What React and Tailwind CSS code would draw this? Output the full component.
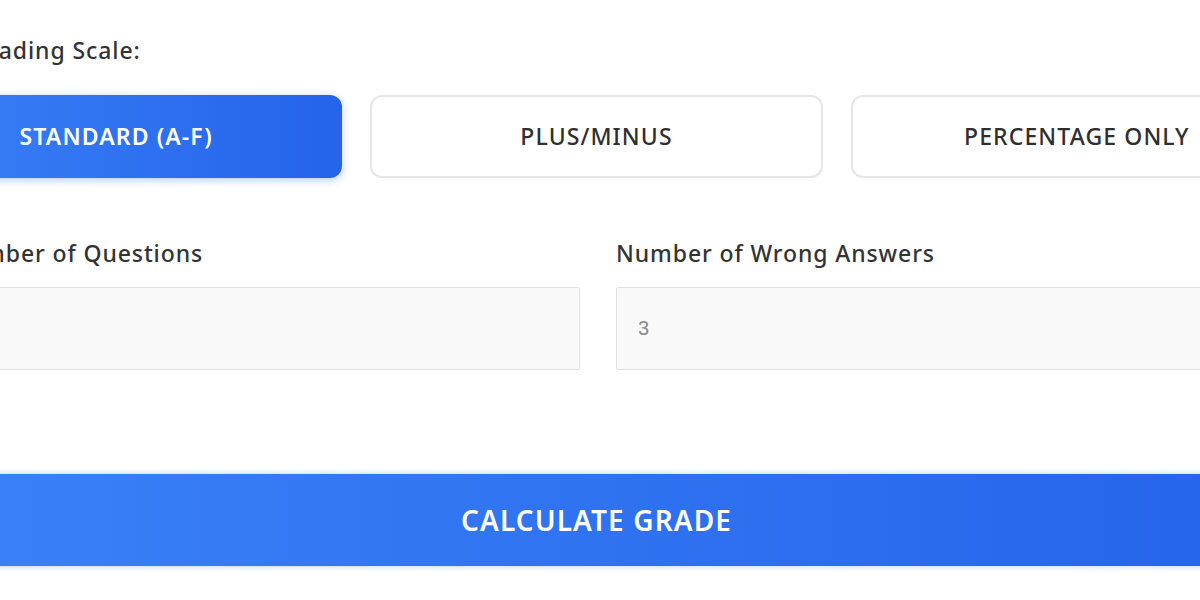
import React, { useState } from 'react';

const scales = ['STANDARD (A-F)', 'PLUS/MINUS', 'PERCENTAGE ONLY'];

const App = () => {
  const [scale, setScale] = useState(0);
  const [questions, setQuestions] = useState('');
  const [wrong, setWrong] = useState('');

  return (
    <div className="w-[1200px] h-[600px] overflow-hidden bg-white font-['Noto_Sans',sans-serif] text-[#2d2d2d]">
      <div className="ml-[-110px] w-[1413px] pt-[35px]">
        {/* Grading scale */}
        <p className="pl-[81px] text-[23px] leading-[30px] tracking-[0.9px] font-medium text-[#333]">Grading Scale:</p>
        <div className="mt-[30px] grid grid-cols-3 gap-[28px]">
          {scales.map((s, i) => (
            <button
              key={s}
              onClick={() => setScale(i)}
              className={
                i === scale
                  ? 'h-[83px] rounded-[12px] bg-gradient-to-r from-[#3b82f6] to-[#2563eb] text-white text-[23px] tracking-[1.1px] font-semibold shadow-[0_2px_8px_rgba(37,99,235,0.35)]'
                  : 'h-[83px] rounded-[12px] bg-white border-2 border-[#e6e6e6] text-[#2f2f2f] text-[23px] tracking-[1.1px] font-medium'
              }
            >
              {s}
            </button>
          ))}
        </div>

        {/* Inputs */}
        <div className="mt-[60px] pl-[59px] pr-[56px] grid grid-cols-2 gap-[36px]">
          <div>
            <label className="block text-[23px] leading-[30px] tracking-[0.9px] font-medium text-[#333]">Number of Questions</label>
            <input
              value={questions}
              onChange={(e) => setQuestions(e.target.value)}
              className="mt-[19px] w-full h-[83px] px-[21px] bg-[#f9f9f9] border border-[#e0e0e0] rounded-[2px] text-[20px] font-['Liberation_Sans',sans-serif] text-[#555] outline-none"
            />
          </div>
          <div>
            <label className="block text-[23px] leading-[30px] tracking-[0.9px] font-medium text-[#333]">Number of Wrong Answers</label>
            <input
              value={wrong}
              onChange={(e) => setWrong(e.target.value)}
              placeholder="3"
              className="mt-[19px] w-full h-[83px] px-[21px] bg-[#f9f9f9] border border-[#e0e0e0] rounded-[2px] text-[20px] font-['Liberation_Sans',sans-serif] text-[#555] placeholder:text-[#8a8a8a] outline-none"
            />
          </div>
        </div>

        {/* Submit */}
        <button className="mt-[104px] w-full h-[92px] rounded-[12px] bg-gradient-to-r from-[#3b82f6] to-[#2563eb] text-white text-[28px] tracking-[1.1px] font-semibold shadow-[0_0_6px_rgba(96,165,250,0.5)]">
          CALCULATE GRADE
        </button>
      </div>
    </div>
  );
};

export default App;
